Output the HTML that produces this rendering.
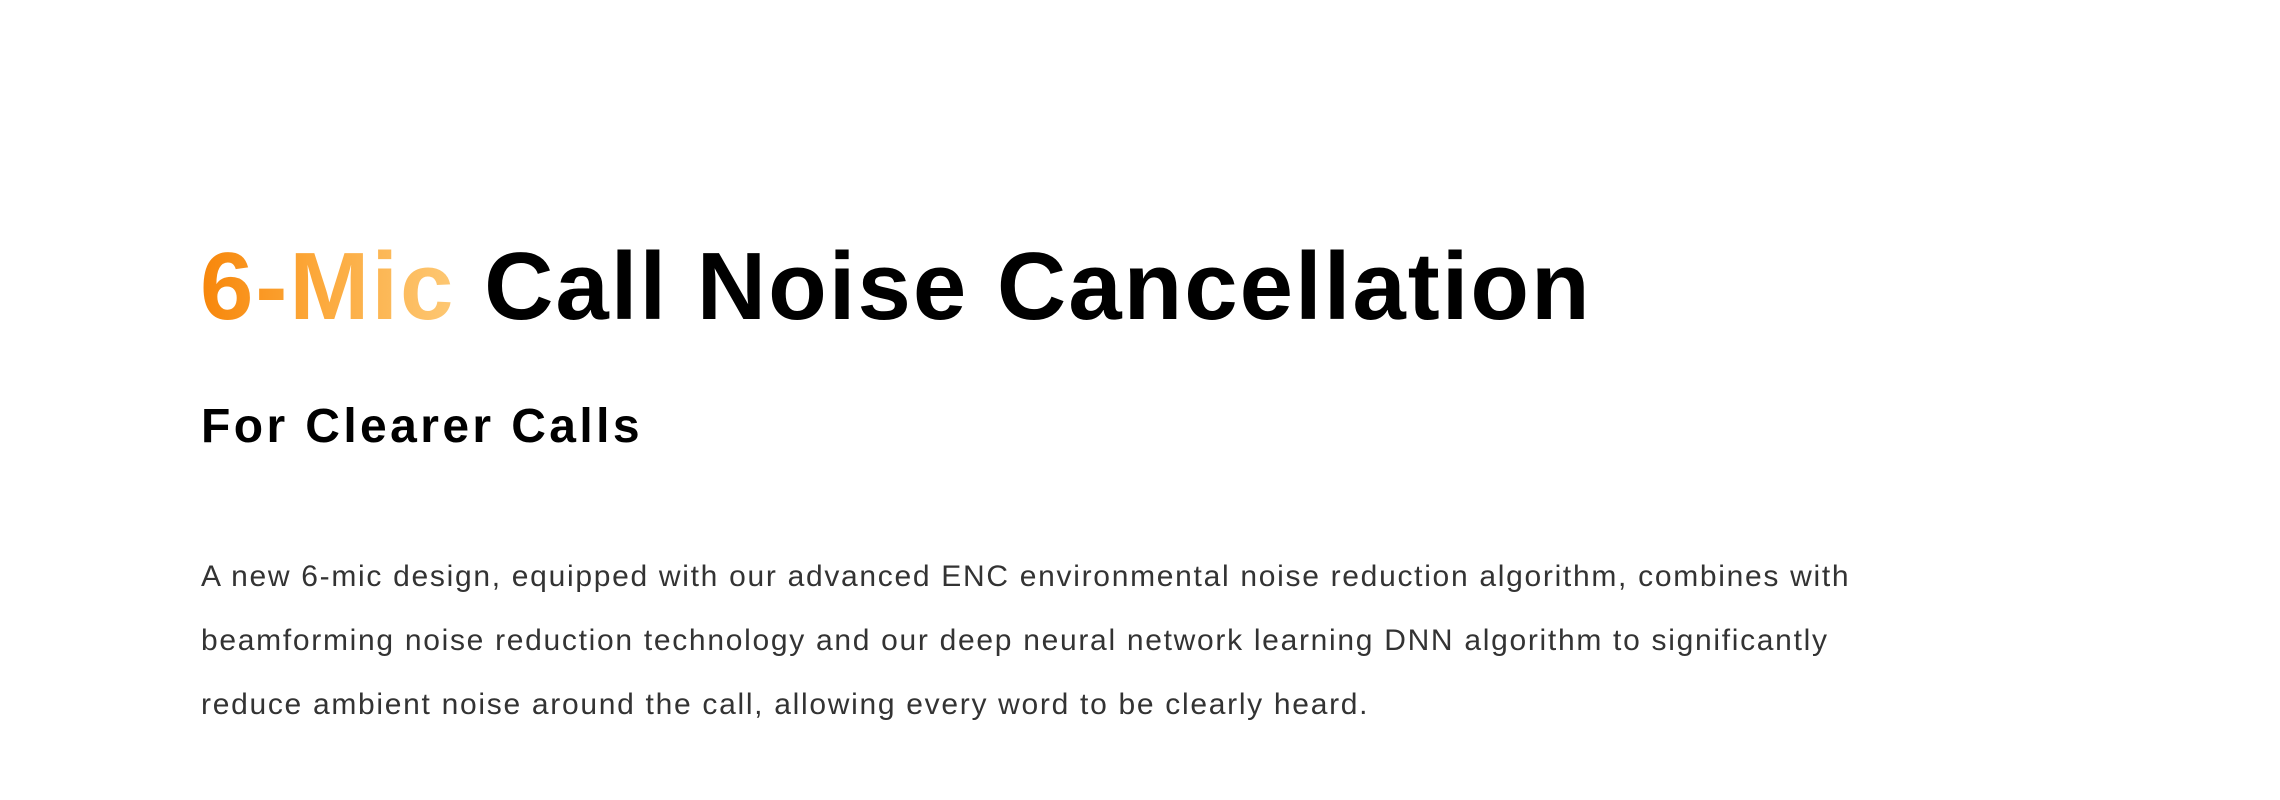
<!DOCTYPE html>
<html><head><meta charset="utf-8"><style>
html,body{margin:0;padding:0;background:#fff;width:2280px;height:800px;overflow:hidden}
body{font-family:"Liberation Sans",sans-serif;position:relative}
.t{position:absolute;left:200px;top:239px;font-size:96px;line-height:96px;color:#000;white-space:nowrap;font-weight:bold;letter-spacing:2px}
.g{background:linear-gradient(90deg,#f7860a 0%,#fca83a 45%,#fdc874 100%);-webkit-background-clip:text;background-clip:text;color:transparent}
.s{position:absolute;left:201px;top:403px;font-size:48px;line-height:48px;color:#000;white-space:nowrap;font-weight:bold;letter-spacing:3.4px}
.b{position:absolute;left:201px;top:545px;font-size:30px;line-height:64px;color:#333;width:2000px;letter-spacing:1.7px;white-space:nowrap}
</style></head><body>
<div class="t"><span class="g">6-Mic</span> Call Noise Cancellation</div>
<div class="s">For Clearer Calls</div>
<div class="b">A new 6-mic design, equipped with our advanced ENC environmental noise reduction algorithm, combines with<br>beamforming noise reduction technology and our deep neural network learning DNN algorithm to significantly<br>reduce ambient noise around the call, allowing every word to be clearly heard.</div>
</body></html>
